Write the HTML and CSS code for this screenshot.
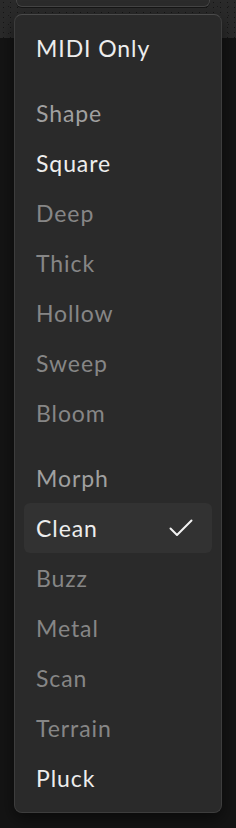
FILE: index.html
```html
<!DOCTYPE html>
<html lang="en">
<head>
    <meta charset="UTF-8">
    <meta name="viewport" content="width=device-width, initial-scale=1.0">
    <title>Engine Menu</title>
    <link rel="stylesheet" href="styles.css">
</head>
<body>

<div class="toolbar">
    <div class="select-button"></div>
</div>

<div class="menu">
    <div class="item">MIDI Only</div>

    <div class="separator"></div>

    <div class="item header">Shape</div>
    <div class="item">Square</div>
    <div class="item muted">Deep</div>
    <div class="item muted">Thick</div>
    <div class="item muted">Hollow</div>
    <div class="item muted">Sweep</div>
    <div class="item muted">Bloom</div>

    <div class="separator"></div>

    <div class="item header">Morph</div>
    <div class="item selected">
        <span>Clean</span>
        <svg class="check" width="24" height="18" viewBox="0 0 24 18">
            <path d="M1.5 9.5 L8 16 L22.5 1.5" fill="none" stroke="#f2f2f2" stroke-width="2" stroke-linecap="round" stroke-linejoin="round"/>
        </svg>
    </div>
    <div class="item muted">Buzz</div>
    <div class="item muted">Metal</div>
    <div class="item muted">Scan</div>
    <div class="item muted">Terrain</div>
    <div class="item">Pluck</div>
</div>

</body>
</html>
```

FILE: styles.css
```css
body {
    margin: 0;
    padding: 0;
    height: 828px;
    overflow: hidden;
    background-color: #141414;
    font-family: Lato, "Noto Sans", sans-serif;
    position: relative;
}
.toolbar {
    height: 38px;
    background-color: #2a2a2a;
    background-image:
        radial-gradient(circle, rgba(0, 0, 0, 0.5) 0.7px, transparent 1px),
        radial-gradient(circle, rgba(0, 0, 0, 0.35) 0.6px, transparent 1px);
    background-size: 7px 5px, 11px 9px;
    background-position: 0 0, 3px 2px;
    padding: 0 26px 0 16px;
}
.select-button {
    height: 6px;
    border: 1px solid #454545;
    border-top: none;
    border-radius: 0 0 6px 6px;
    background-color: #2b2b2b;
    box-shadow: 0 1px 0 #161616;
}
.menu {
    position: absolute;
    top: 14px;
    left: 14px;
    width: 188px;
    padding: 8px 9px 9px 9px;
    background-color: #2a2a2a;
    border: 1px solid #3d3d3d;
    border-top-color: #4a4a4a;
    border-radius: 8px;
    box-shadow: 0 6px 16px rgba(0, 0, 0, 0.5);
}
.item {
    height: 50px;
    line-height: 50px;
    padding: 0 19px 0 12px;
    font-size: 23px;
    letter-spacing: 0.04em;
    color: #ededed;
    border-radius: 6px;
    display: flex;
    align-items: center;
    justify-content: space-between;
}
.item.header {
    color: #a0a0a0;
}
.item.muted {
    color: #868686;
}
.item.selected {
    background-color: #323232;
}
.check {
    display: block;
}
.separator {
    height: 15px;
}
```
